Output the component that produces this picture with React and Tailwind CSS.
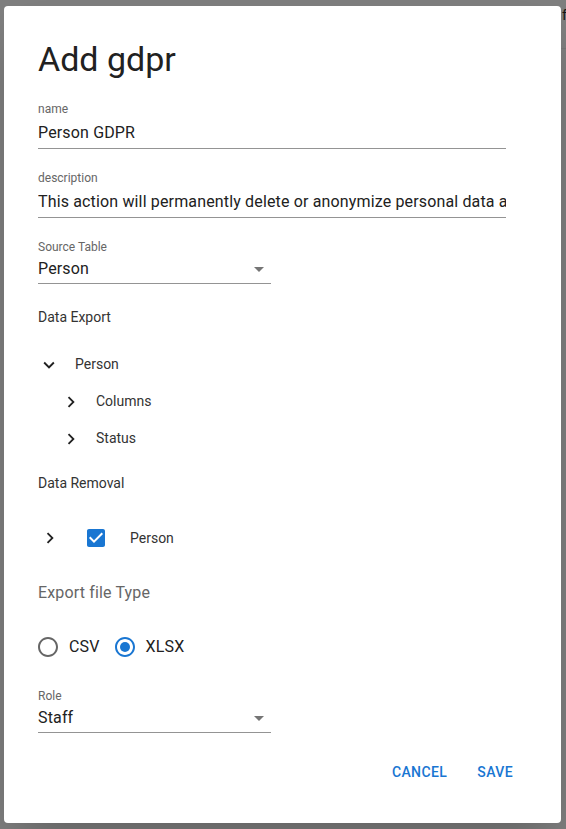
const font = { fontFamily: 'Roboto, "Liberation Sans", sans-serif' };

const ChevronRight = ({ size = 22 }) => (
  <svg width={size} height={size} viewBox="0 0 24 24" className="fill-[#212121]">
    <path d="M8.59 16.59 13.17 12 8.59 7.41 10 6l6 6-6 6z" />
  </svg>
);

const ChevronDown = ({ size = 22 }) => (
  <svg width={size} height={size} viewBox="0 0 24 24" className="fill-[#212121]">
    <path d="M16.59 8.59 12 13.17 7.41 8.59 6 10l6 6 6-6z" />
  </svg>
);

const ArrowDrop = () => (
  <svg width="24" height="24" viewBox="0 0 24 24" className="fill-[#757575]">
    <path d="M7 10l5 5 5-5z" />
  </svg>
);

const TextField = ({ label, value, className = '' }) => (
  <div className={`flex flex-col w-[468px] border-b border-[#949494] pb-[3px] ${className}`}>
    <div className="h-[17px] flex items-center text-[12px] text-[#666]">{label}</div>
    <input
      readOnly
      value={value}
      className="mt-[4px] h-[24px] w-full bg-transparent outline-none text-[16px] tracking-[0.15px] text-[#212121]"
      style={font}
    />
  </div>
);

const SelectField = ({ label, value, className = '' }) => (
  <div className={`flex flex-col w-[233px] border-b border-[#949494] pb-[2px] ${className}`}>
    <div className="h-[17px] flex items-center text-[12px] text-[#666]">{label}</div>
    <div className="mt-[2px] h-[24px] flex items-center justify-between text-[16px] tracking-[0.15px] text-[#212121]">
      <span>{value}</span>
      <ArrowDrop />
    </div>
  </div>
);

const Radio = ({ checked }) => (
  <svg width="24" height="24" viewBox="0 0 24 24" className={checked ? 'fill-[#1976d2]' : 'fill-[#666]'}>
    <path d="M12 2C6.48 2 2 6.48 2 12s4.48 10 10 10 10-4.48 10-10S17.52 2 12 2zm0 18c-4.42 0-8-3.58-8-8s3.58-8 8-8 8 3.58 8 8-3.58 8-8 8z" />
    {checked && <circle cx="12" cy="12" r="5" />}
  </svg>
);

const App = () => {
  return (
    <div className="w-[566px] h-[829px] bg-[#7f7f7f] flex overflow-hidden" style={font}>
      <div className="ml-[4px] mt-[6px] w-[557px] h-[817px] bg-white rounded-[4px] shadow-2xl flex flex-col pl-[34px] shrink-0">
        <h2 className="mt-[32px] h-[42px] text-[34px] leading-[42px] text-[#212121] font-normal">Add gdpr</h2>

        <TextField label="name" value="Person GDPR" className="mt-[20px]" />
        <TextField
          label="description"
          value="This action will permanently delete or anonymize personal data associated with this record"
          className="mt-[20px]"
        />
        <SelectField label="Source Table" value="Person" className="mt-[20px]" />

        <div className="mt-[23px] h-[20px] flex items-center text-[14px] text-[#333]">Data Export</div>

        <div className="mt-[19px] flex flex-col text-[14px] text-[#333]">
          <div className="h-[37px] flex items-center">
            <span className="w-[22px] flex justify-center"><ChevronDown /></span>
            <span className="ml-[15px]">Person</span>
          </div>
          <div className="h-[37px] flex items-center pl-[22px]">
            <span className="w-[22px] flex justify-center"><ChevronRight /></span>
            <span className="ml-[14px]">Columns</span>
          </div>
          <div className="h-[37px] flex items-center pl-[22px]">
            <span className="w-[22px] flex justify-center"><ChevronRight /></span>
            <span className="ml-[14px]">Status</span>
          </div>
        </div>

        <div className="mt-[16px] h-[20px] flex items-center text-[14px] text-[#333]">Data Removal</div>

        <div className="mt-[24px] h-[42px] flex items-center text-[14px] text-[#333]">
          <span className="ml-[1px] w-[22px] flex justify-center"><ChevronRight /></span>
          <svg width="24" height="24" viewBox="0 0 24 24" className="ml-[23px] fill-[#1976d2]">
            <path d="M19 3H5c-1.11 0-2 .9-2 2v14c0 1.1.89 2 2 2h14c1.11 0 2-.9 2-2V5c0-1.1-.89-2-2-2zm-9 14-5-5 1.41-1.41L10 14.17l7.59-7.59L19 8l-7 7z" />
          </svg>
          <span className="ml-[22px]">Person</span>
        </div>

        <div className="mt-[22px] h-[24px] flex items-center text-[16px] tracking-[0.15px] text-[#666]">Export file Type</div>

        <div className="mt-[21px] h-[42px] flex items-center text-[16px] tracking-[0.15px] text-[#212121]">
          <span className="ml-[-2px]"><Radio /></span>
          <span className="ml-[9px]">CSV</span>
          <span className="ml-[13px]"><Radio checked /></span>
          <span className="ml-[9px]">XLSX</span>
        </div>

        <SelectField label="Role" value="Staff" className="mt-[19px]" />

        <div className="mt-[21px] h-[36px] flex items-center justify-end gap-[14px] pr-[40px]">
          <button className="h-[36px] px-[8px] text-[14px] font-medium uppercase tracking-[0.4px] text-[#1976d2]">
            Cancel
          </button>
          <button className="h-[36px] px-[8px] text-[14px] font-medium uppercase tracking-[0.4px] text-[#1976d2]">
            Save
          </button>
        </div>
      </div>
      <div className="flex flex-col w-[5px] shrink-0">
        <div className="h-[49px] border-b border-[#727272] pl-[1px] pt-[7px] text-[14px] leading-[16px] text-[#111] overflow-hidden">
          f
        </div>
      </div>
    </div>
  );
};

export default App;
